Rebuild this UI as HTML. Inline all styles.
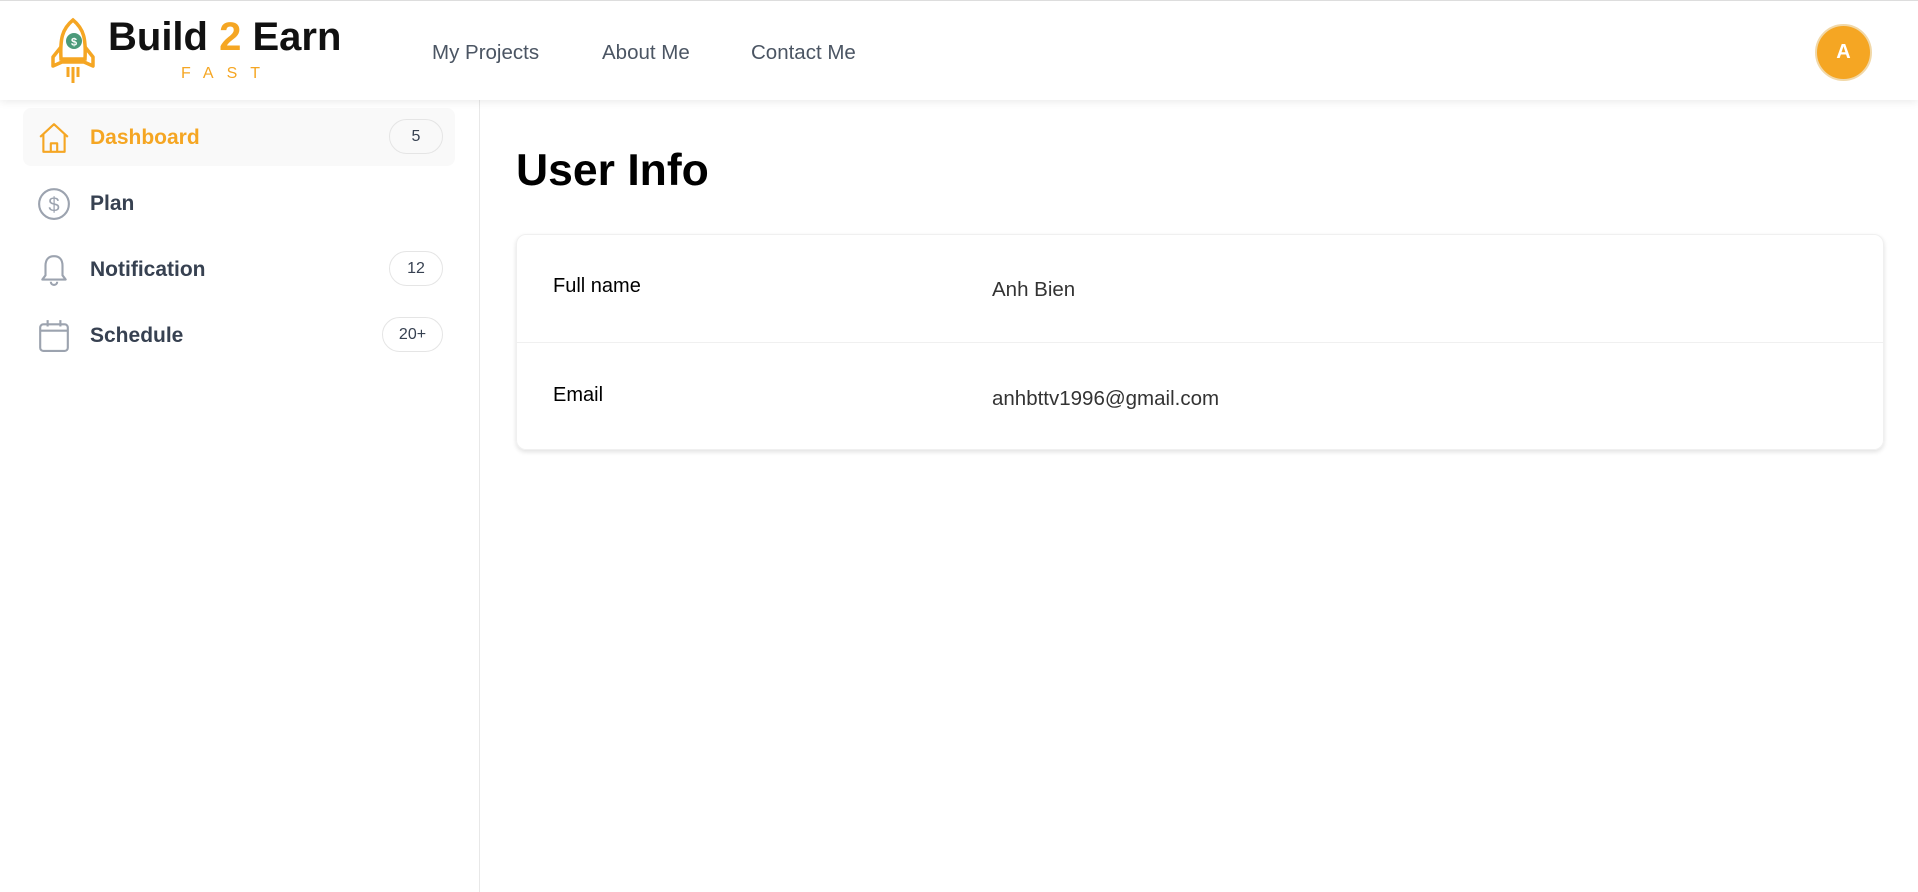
<!DOCTYPE html>
<html><head><meta charset="utf-8"><style>
*{margin:0;padding:0;box-sizing:border-box}
body{width:1918px;height:892px;background:#fff;font-family:"Liberation Sans",Arial,sans-serif;position:relative;overflow:hidden}
.hdr{position:absolute;left:0;top:0;width:1918px;height:100px;border-top:1px solid #ddd;background:#fff;box-shadow:0 2px 8px rgba(0,0,0,.08);z-index:2}
.abs{position:absolute}
.nav{position:absolute;top:40px;font-size:20.5px;color:#4b5563}
.side{position:absolute;left:0;top:100px;width:480px;height:792px;border-right:1px solid #e8e8e8}
.item{position:absolute;left:23px;width:432px;height:58px}
.item .t{position:absolute;left:67px;top:18px;font-size:21px;font-weight:bold;color:#374151}
.item svg{position:absolute;left:14px;top:13px}
.badge{position:absolute;top:11px;height:35px;border:1px solid #e5e5e5;border-radius:18px;font-size:16px;color:#374151;text-align:center;line-height:33px}
</style></head><body>
<div class="hdr">
<svg class="abs" style="left:49px;top:16px" width="48" height="68" viewBox="0 0 48 68">
<path d="M24 3 C13 12 11 22 12 42 L36 42 C37 22 35 12 24 3 Z" fill="none" stroke="#f5a623" stroke-width="3.5"/>
<path d="M12 30 L4 40 L4 49 L13 45 L35 45 L44 49 L44 40 L36 30" fill="none" stroke="#f5a623" stroke-width="3.5" stroke-linejoin="round"/>
<circle cx="25" cy="24" r="8" fill="#4c9a7a"/>
<text x="25" y="28.5" font-size="11" font-weight="bold" fill="#fff" text-anchor="middle" font-family="Liberation Sans">$</text>
<path d="M19 50 L19 60 M24 50 L24 66 M29 50 L29 60" stroke="#f5a623" stroke-width="3"/>
</svg>
<div class="abs" style="left:108px;top:14px;font-size:40px;font-weight:bold;color:#111;letter-spacing:0px">Build <span style="color:#f5a623">2</span> Earn</div>
<div class="abs" style="left:181px;top:64px;font-size:16px;color:#f5a623;letter-spacing:13px">FAST</div>
<div class="nav" style="left:432px">My Projects</div>
<div class="nav" style="left:602px">About Me</div>
<div class="nav" style="left:751px">Contact Me</div>
<div class="abs" style="left:1815px;top:23px;width:57px;height:57px;border-radius:50%;background:#f5a623;border:2px solid #f1d8a8;color:#fff;font-weight:bold;font-size:20px;text-align:center;line-height:53px">A</div>
</div>
<div class="side">
<div class="item" style="top:8px;background:#f9f9f9;border-radius:8px">
<svg width="34" height="34" viewBox="0 0 32 32"><path d="M3 15 L16 3 L29 15 M6 12 L6 29 L26 29 L26 12 M13 29 L13 21 L19 21 L19 29" fill="none" stroke="#f5a623" stroke-width="2" stroke-linejoin="round"/></svg>
<div class="t" style="color:#f5a623">Dashboard</div>
<div class="badge" style="left:366px;width:54px">5</div>
</div>
<div class="item" style="top:74px">
<svg width="34" height="34" viewBox="0 0 32 32"><circle cx="16" cy="16" r="14" fill="none" stroke="#9ca3af" stroke-width="2"/><text x="16" y="23" font-size="19" fill="#9ca3af" text-anchor="middle" font-family="Liberation Sans">$</text></svg>
<div class="t">Plan</div>
</div>
<div class="item" style="top:140px">
<svg width="34" height="34" viewBox="0 0 32 32"><path d="M8 21 L8 12 C8 6 11 3 16 3 C21 3 24 6 24 12 L24 21 L27 25 L5 25 Z M13 27 C13 31 19 31 19 27" fill="none" stroke="#9ca3af" stroke-width="2" stroke-linejoin="round"/></svg>
<div class="t">Notification</div>
<div class="badge" style="left:366px;width:54px">12</div>
</div>
<div class="item" style="top:206px">
<svg width="34" height="34" viewBox="0 0 32 32"><rect x="3" y="5" width="26" height="25" rx="3" fill="none" stroke="#9ca3af" stroke-width="2"/><path d="M3 11 L29 11 M10 1 L10 7 M22 1 L22 7" stroke="#9ca3af" stroke-width="2"/></svg>
<div class="t">Schedule</div>
<div class="badge" style="left:359px;width:61px">20+</div>
</div>
</div>
<div class="abs" style="left:516px;top:146px;font-size:44.5px;font-weight:bold;color:#000">User Info</div>
<div class="abs" style="left:516px;top:234px;width:1368px;height:216px;border-radius:10px;border:1px solid #f0f0f0;box-shadow:0 2px 5px rgba(0,0,0,.12)">
<div class="abs" style="left:0;top:107px;width:100%;height:1px;background:#f0f0f0"></div>
<div class="abs" style="left:36px;top:40px;font-size:20px;color:#000">Full name</div>
<div class="abs" style="left:475px;top:43px;font-size:20.5px;color:#333">Anh Bien</div>
<div class="abs" style="left:36px;top:149px;font-size:20px;color:#000">Email</div>
<div class="abs" style="left:475px;top:152px;font-size:20.5px;color:#333">anhbttv1996@gmail.com</div>
</div>
</body></html>
